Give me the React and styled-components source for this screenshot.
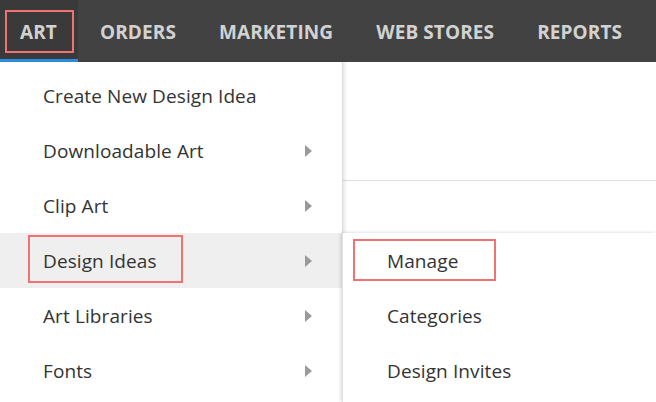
import React from "react";
import styled, { createGlobalStyle } from "styled-components";

const Global = createGlobalStyle`
  html, body { margin: 0; padding: 0; background: #fff; }
  body { font-family: "Open Sans", "Liberation Sans", sans-serif; }
  #root { width: 656px; height: 402px; overflow: hidden; }
`;

const Page = styled.div`
  width: 656px;
  height: 402px;
  display: flex;
  flex-direction: column;
  background: #fff;
  overflow: hidden;
`;

const NavBar = styled.nav`
  height: 62px;
  flex: none;
  display: flex;
  align-items: stretch;
  background: #424242;
`;

const Tab = styled.div`
  position: relative;
  display: flex;
  align-items: center;
  padding: 2px 21px 0 ${(p) => (p.$first ? "20px" : "22px")};
  font-size: 19px;
  font-weight: 700;
  letter-spacing: 0.1px;
  color: #d2d2d2;
  background: ${(p) => (p.$active ? "#3a3a3a" : "transparent")};
  box-shadow: ${(p) => (p.$active ? "inset 0 -3px 0 #2d8fe3" : "none")};
`;

const Highlight = styled.span`
  position: absolute;
  left: ${(p) => p.$l}px;
  top: ${(p) => p.$t}px;
  right: ${(p) => p.$r}px;
  bottom: ${(p) => p.$b}px;
  border: 2px solid #f07272;
  pointer-events: none;
`;

const Body = styled.div`
  flex: 1;
  display: flex;
  position: relative;
`;

const Menu = styled.ul`
  list-style: none;
  margin: 0;
  padding: 6px 0 0;
  width: 342px;
  flex: none;
  background: #fff;
  border-right: 1px solid #dcdcdc;
  box-shadow: 2px 0 3px rgba(0, 0, 0, 0.1);
  position: relative;
  z-index: 2;
`;

const Item = styled.li`
  position: relative;
  height: 55px;
  display: flex;
  align-items: center;
  justify-content: space-between;
  padding: 0 30px 0 ${(p) => p.$indent}px;
  font-size: 19px;
  letter-spacing: 0.1px;
  color: #333;
  background: ${(p) => (p.$active ? "#efefef" : "transparent")};
`;

const Arrow = styled.span`
  width: 0;
  height: 0;
  border-top: 6px solid transparent;
  border-bottom: 6px solid transparent;
  border-left: 7px solid #9a9a9a;
`;

const Content = styled.div`
  flex: 1;
  display: flex;
  flex-direction: column;
`;

const ContentHeader = styled.div`
  height: 118px;
  border-bottom: 1px solid #dedede;
`;

const SubMenu = styled.ul`
  position: absolute;
  left: 342px;
  top: 171px;
  right: 0;
  bottom: 0;
  list-style: none;
  margin: 0;
  padding: 0;
  background: #fff;
  box-shadow: -2px 0 3px rgba(0, 0, 0, 0.1), 0 -1px 3px rgba(0, 0, 0, 0.06);
  border-left: 1px solid #e2e2e2;
  z-index: 3;
`;

const tabs = ["ART", "ORDERS", "MARKETING", "WEB STORES", "REPORTS"];
const items = [
  { label: "Create New Design Idea" },
  { label: "Downloadable Art", sub: true },
  { label: "Clip Art", sub: true },
  { label: "Design Ideas", sub: true, active: true },
  { label: "Art Libraries", sub: true },
  { label: "Fonts", sub: true },
];
const subItems = ["Manage", "Categories", "Design Invites"];

export default function App() {
  return (
    <Page>
      <Global />
      <NavBar>
        {tabs.map((t, i) => (
          <Tab key={t} $first={i === 0} $active={i === 0}>
            {t}
            {i === 0 && <Highlight $l={5} $t={10} $r={4} $b={9} />}
          </Tab>
        ))}
      </NavBar>
      <Body>
        <Menu>
          {items.map((it) => (
            <Item key={it.label} $indent={43} $active={it.active}>
              <span>{it.label}</span>
              {it.sub && <Arrow />}
              {it.active && <Highlight $l={28} $t={2} $r={159} $b={5} />}
            </Item>
          ))}
        </Menu>
        <Content>
          <ContentHeader />
        </Content>
        <SubMenu>
          {subItems.map((s, i) => (
            <Item key={s} $indent={44}>
              <span>{s}</span>
              {i === 0 && <Highlight $l={10} $t={6} $r={160} $b={7} />}
            </Item>
          ))}
        </SubMenu>
      </Body>
    </Page>
  );
}
